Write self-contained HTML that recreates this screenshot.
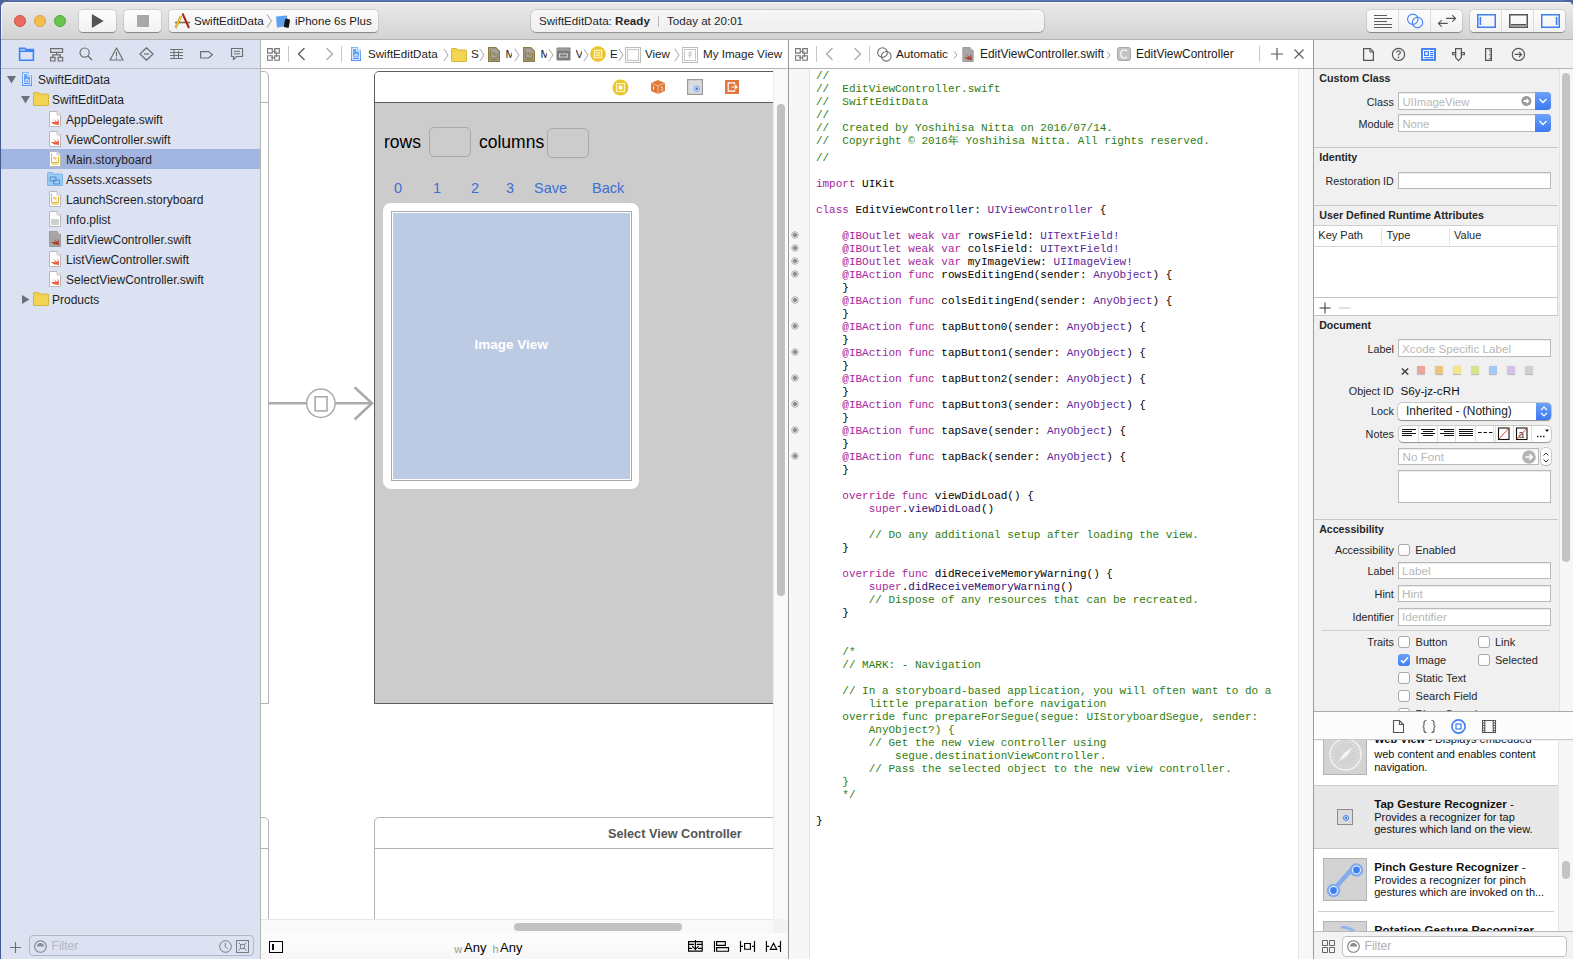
<!DOCTYPE html>
<html><head><meta charset="utf-8">
<style>
*{box-sizing:border-box;margin:0;padding:0}
html,body{width:1573px;height:959px;overflow:hidden;background:#5a73a6;font-family:"Liberation Sans",sans-serif;}
.a{position:absolute}
#win{position:absolute;left:0;top:0;width:1573px;height:959px;background:#ececec;overflow:hidden}
#tb{position:absolute;left:0;top:0;width:1573px;height:40px;background:linear-gradient(#ebebeb,#d3d3d3);border-bottom:1px solid #b1b1b1}
.btn{position:absolute;top:8px;height:22px;border-radius:4px;background:linear-gradient(#fdfdfd,#f1f1f1);box-shadow:0 0.5px 1px rgba(0,0,0,.35),0 0 0 0.5px rgba(0,0,0,.12)}
.t12{font-size:12px;line-height:20px;white-space:pre;color:#1e1e1e}
#nav{position:absolute;left:0;top:40px;width:260px;height:919px;background:#dce2f1}
#navtb{position:absolute;left:0;top:0;width:260px;height:29px;border-bottom:1px solid #b8bcc6}
.row{position:absolute;left:0;width:259px;height:20px}
.row .tx{position:absolute;top:0}
#canvas{position:absolute;left:260px;top:40px;width:528px;height:919px;background:#fff;overflow:hidden;border-left:1px solid #b5b5b5}
.jb{position:absolute;left:0;top:0;height:29px;background:#fff;border-bottom:1px solid #b5b5b5}
#editor{position:absolute;left:788px;top:40px;width:525px;height:919px;background:#fff;border-left:1px solid #9a9a9a}
#insp{position:absolute;left:1313px;top:40px;width:260px;height:919px;background:#f0f0f0;overflow:hidden;border-left:1px solid #9c9c9c}
.code{position:absolute;left:26.9px;font-family:"Liberation Mono",monospace;font-size:11px;line-height:13px;white-space:pre;color:#000}
.omk{position:absolute;left:1.5px;width:8px;height:8px;border-radius:50%;background:radial-gradient(circle,#8d8d8d 0 1.6px,#dedede 2.2px,#cacaca 2.8px,#c4c4c4 3.6px,rgba(200,200,200,0) 4px)}
.jt{top:4px;font-size:11.6px;line-height:20px;white-space:pre;color:#1c1c1c}
.chev{top:8px;width:6px;height:14px}
.btnt{top:138px;font-size:14.5px;line-height:20px;color:#3d6fd6;white-space:pre}
.cm{color:#2e7d0e}.kw{color:#a8259a}.ty{color:#5c2699}.fn{color:#2e0d6e}
</style></head><body>
<div id="win">
  <div id="tb">
    <div class="a" style="left:14px;top:15px;width:12px;height:12px;border-radius:50%;background:#ec6b5f;border:0.5px solid #d0503f"></div>
    <div class="a" style="left:34px;top:15px;width:12px;height:12px;border-radius:50%;background:#f4bf4f;border:0.5px solid #d8a03a"></div>
    <div class="a" style="left:54px;top:15px;width:12px;height:12px;border-radius:50%;background:#6ac54f;border:0.5px solid #4ca73b"></div>
    <div class="btn" style="left:79px;top:10px;width:37px"></div>
    <svg class="a" style="left:91px;top:14px" width="14" height="14" viewBox="0 0 14 14"><path d="M0.9 0V14L12.7 7Z" fill="#545454"/></svg>
    <div class="btn" style="left:124px;top:10px;width:37px"></div>
    <div class="a" style="left:137px;top:15px;width:12px;height:12px;background:#a8a8a8"></div>
    <div class="btn" style="left:169px;top:10px;width:209px"></div>
    <svg class="a" style="left:174px;top:12px" width="17" height="17" viewBox="0 0 17 17"><path d="M1 10.5H16" stroke="#8a6a3a" stroke-width="1.6"/><path d="M8.5 1.5L15 16" stroke="#a3251c" stroke-width="2"/><path d="M7 4L1.5 16" stroke="#b78c2c" stroke-width="2.4"/><path d="M7 4L1.5 16" stroke="#f1d44a" stroke-width="1.2"/></svg>
    <div class="a" style="left:194px;top:11px;font-size:11.6px;line-height:20px;white-space:pre;color:#1a1a1a">SwiftEditData</div>
    <svg class="a" style="left:266px;top:14px" width="7" height="14" viewBox="0 0 7 14"><path d="M1 0.5L5.5 7L1 13.5" fill="none" stroke="#9a9a9a" stroke-width="1"/></svg>
    <svg class="a" style="left:275px;top:15px" width="16" height="13" viewBox="0 0 16 13"><path d="M1 1.5L12 0.5L13 11L2 12.5Z" fill="#5e9ff1"/><rect x="9.5" y="4" width="5" height="8.5" rx="1" fill="#111" transform="rotate(10 12 8)"/></svg>
    <div class="a" style="left:295px;top:11px;font-size:11.5px;line-height:20px;white-space:pre;color:#1a1a1a">iPhone 6s Plus</div>
    <div class="a" style="left:531px;top:10px;width:512.5px;height:22px;border-radius:5px;background:linear-gradient(#f6f6f6,#f0f0f0);box-shadow:0 0 0 0.5px rgba(0,0,0,.2),0 0.5px 1px rgba(0,0,0,.25)"></div>
    <div class="a" style="left:539px;top:11px;font-size:11.6px;line-height:20px;white-space:pre;color:#262626">SwiftEditData: <b>Ready</b></div>
    <div class="a" style="left:658px;top:16px;width:1px;height:11px;background:#b9b9b9"></div>
    <div class="a" style="left:667px;top:11px;font-size:11.6px;line-height:20px;white-space:pre;color:#262626">Today at 20:01</div>
    <div class="btn" style="left:1367px;top:10px;width:95px"></div>
    <div class="a" style="left:1398px;top:10px;width:1px;height:22px;background:#dadada"></div>
    <div class="a" style="left:1430px;top:10px;width:1px;height:22px;background:#dadada"></div>
    <svg class="a" style="left:1374px;top:15px" width="18" height="13" viewBox="0 0 18 13"><path d="M0 0.5H13M0 3.5H18M0 6.5H13M0 9.5H18M0 12.5H18" stroke="#5a5a5a" stroke-width="1"/></svg>
    <svg class="a" style="left:1406px;top:13px" width="18" height="16" viewBox="0 0 18 16"><circle cx="6.8" cy="6.3" r="5.2" fill="none" stroke="#3f7ef6" stroke-width="1.1"/><circle cx="11.5" cy="9.5" r="5.2" fill="none" stroke="#3f7ef6" stroke-width="1.1"/></svg>
    <svg class="a" style="left:1437px;top:14px" width="20" height="14" viewBox="0 0 20 14"><path d="M9.1 4.4H18.6M15.2 1.2L18.6 4.4L15.2 7.6M10.75 9.4H1.4M4.7 6.2L1.4 9.4L4.7 12.7" fill="none" stroke="#555" stroke-width="1.1"/></svg>
    <div class="btn" style="left:1470px;top:10px;width:95px"></div>
    <div class="a" style="left:1501px;top:10px;width:1px;height:22px;background:#dadada"></div>
    <div class="a" style="left:1533px;top:10px;width:1px;height:22px;background:#dadada"></div>
    <svg class="a" style="left:1477px;top:14px" width="19" height="14" viewBox="0 0 19 14"><rect x="0.75" y="0.75" width="17.5" height="12.5" fill="none" stroke="#3f7ef6" stroke-width="1.5"/><rect x="2.6" y="3" width="1.6" height="8" fill="#3f7ef6"/></svg>
    <svg class="a" style="left:1509px;top:14px" width="19" height="14" viewBox="0 0 19 14"><rect x="0.75" y="0.75" width="17.5" height="12.5" fill="none" stroke="#555" stroke-width="1.5"/><rect x="2" y="10" width="15" height="1.6" fill="#555"/></svg>
    <svg class="a" style="left:1541px;top:14px" width="19" height="14" viewBox="0 0 19 14"><rect x="0.75" y="0.75" width="17.5" height="12.5" fill="none" stroke="#3f7ef6" stroke-width="1.5"/><rect x="14.8" y="3" width="1.6" height="8" fill="#3f7ef6"/></svg>
  </div>
  <div id="nav">
<svg width="0" height="0" style="position:absolute">
 <defs>
  <symbol id="i-doc" viewBox="0 0 12 16"><path d="M0.5 0.5H8L11.5 4V15.5H0.5Z" fill="#fff" stroke="#b9b9b9"/><path d="M8 0.5V4H11.5" fill="#eee" stroke="#c8c8c8"/></symbol>
  <symbol id="i-swift" viewBox="0 0 12 16"><path d="M0.5 0.5H8L11.5 4V15.5H0.5Z" fill="#fff" stroke="#b9b9b9"/><path d="M8 0.5V4H11.5" fill="#eee" stroke="#c8c8c8"/><g transform="translate(2 6.8) scale(0.85)"><path d="M0 4.8C2.2 7 4.8 8.4 7 7.8C7.8 8.4 8.8 8.7 9.8 8.5C9.2 7.9 9 7.2 9.2 6.2C9.8 4 8.8 1.8 7.2 0.4C8 2 8.2 3.6 7.5 5C5.6 3.9 3.6 2.2 1.9 0.6C3.1 2.2 4.6 3.8 5.6 5.1C3.8 5 2 4.8 0 4.8Z" fill="#ea5a3c"/></g></symbol>
  <symbol id="i-swiftg" viewBox="0 0 12 16"><path d="M0.5 0.5H8L11.5 4V15.5H0.5Z" fill="#a6a6a6" stroke="#9a9a9a"/><path d="M8 0.5V4H11.5" fill="#c9c9c9" stroke="#9a9a9a"/><g transform="translate(2 6.8) scale(0.85)"><path d="M0 4.8C2.2 7 4.8 8.4 7 7.8C7.8 8.4 8.8 8.7 9.8 8.5C9.2 7.9 9 7.2 9.2 6.2C9.8 4 8.8 1.8 7.2 0.4C8 2 8.2 3.6 7.5 5C5.6 3.9 3.6 2.2 1.9 0.6C3.1 2.2 4.6 3.8 5.6 5.1C3.8 5 2 4.8 0 4.8Z" fill="#a8402a"/></g></symbol>
  <symbol id="i-sb" viewBox="0 0 12 16"><path d="M0.5 0.5H8L11.5 4V15.5H0.5Z" fill="#fff" stroke="#b9b9b9"/><path d="M8 0.5V4H11.5" fill="#eee" stroke="#c8c8c8"/><path d="M2.5 2.5V11.5H9.5V5.5" fill="none" stroke="#e4b62a" stroke-width="1"/><path d="M2.5 13H9.5" stroke="#e4b62a"/><path d="M4 8C5 6 7 6 8 7.5M4.5 6.5L7.5 9.5" fill="none" stroke="#e4b62a" stroke-width=".9"/></symbol>
  <symbol id="i-plist" viewBox="0 0 12 16"><path d="M0.5 0.5H8L11.5 4V15.5H0.5Z" fill="#fff" stroke="#b9b9b9"/><path d="M8 0.5V4H11.5" fill="#eee" stroke="#c8c8c8"/><path d="M2.5 8.5H9.5V13.5H2.5ZM2.5 11H9.5M5 8.5V13.5M7.2 8.5V13.5" fill="#ddd" stroke="#c4c4c4" stroke-width=".8"/></symbol>
  <symbol id="i-proj" viewBox="0 0 12 16"><defs><linearGradient id="gp" x1="0" y1="0" x2="0" y2="1"><stop offset="0" stop-color="#7ab2f4"/><stop offset="1" stop-color="#4a88f2"/></linearGradient></defs><path d="M1 0H7.8L11 3.2V14H1Z" fill="url(#gp)"/><path d="M7.8 0V3.2H11Z" fill="#f4f8ff"/><path d="M2.4 1.4H6.8V4.2H9.6V12.6H2.4ZM2.4 10.2H9.6" fill="none" stroke="#eaf2fe" stroke-width="1"/><path d="M4.2 8.6Q6 6.6 7.8 8.6" fill="none" stroke="#eaf2fe" stroke-width="1.1"/></symbol>
  <symbol id="i-folder" viewBox="0 0 16 14"><path d="M0.5 1.2Q0.5 0.5 1.2 0.5H5.5L6.5 2H14.8Q15.5 2 15.5 2.7V13Q15.5 13.5 15 13.5H1Q0.5 13.5 0.5 13Z" fill="#f2d552" stroke="#d8b63a"/><path d="M0.5 3H15.5" stroke="#e6c544" stroke-width=".6"/></symbol>
  <symbol id="i-assets" viewBox="0 0 16 14"><path d="M0.5 1.2Q0.5 0.5 1.2 0.5H5.5L6.5 2H14.8Q15.5 2 15.5 2.7V13Q15.5 13.5 15 13.5H1Q0.5 13.5 0.5 13Z" fill="#9ccbf3" stroke="#7fb5e6"/><path d="M3 5H9V9H3ZM6.5 8H12.5V12H6.5Z" fill="none" stroke="#4b8ed6" stroke-width="1"/></symbol>
  <symbol id="i-tri" viewBox="0 0 9 8"><path d="M0 0H9L4.5 7.5Z" fill="#6d717a"/></symbol>
  <symbol id="i-trir" viewBox="0 0 8 9"><path d="M0 0V9L7.5 4.5Z" fill="#6d717a"/></symbol>
  <symbol id="i-chev" viewBox="0 0 6 14"><path d="M0.8 0.8L5 7L0.8 13.2" fill="none" stroke="#a5a5a5" stroke-width="1"/></symbol>
  <symbol id="i-sbg" viewBox="0 0 12 15"><path d="M0.6 0.6H7.8L11.4 4.2V14.4H0.6Z" fill="#a7a39a" stroke="#8b7b3f" stroke-width="1.2"/><path d="M2.6 3V11H9.4V6M2.6 12.6H9.4" fill="none" stroke="#8b7b3f" stroke-width="1"/><path d="M4 7.5C5 5.5 7 5.5 8 7M4.5 6L7.5 9" fill="none" stroke="#8b7b3f" stroke-width=".9"/></symbol>
 </defs>
</svg>
<div id="navtb">
 <svg class="a" style="left:18px;top:7px" width="17" height="15" viewBox="0 0 17 15"><path d="M1.6 1.4H7L8 2.6H15.4V13.2H1.6Z M1.6 4.2H15.4" fill="none" stroke="#3d82f7" stroke-width="1.6"/></svg>
 <svg class="a" style="left:49px;top:7px" width="15" height="15" viewBox="0 0 15 15"><path d="M1.6 1.6H13.6V5.4H1.6ZM1.6 10.4H6V14H1.6ZM9.2 10.4H13.6V14H9.2ZM7.6 5.4V7.8M3.8 10.4V7.8H11.4V10.4" fill="none" stroke="#6f6f6f" stroke-width="1.2"/></svg>
 <svg class="a" style="left:79px;top:7px" width="14" height="14" viewBox="0 0 14 14"><circle cx="5.6" cy="5.6" r="4.6" fill="none" stroke="#6f6f6f" stroke-width="1.2"/><path d="M9 9L13 13" stroke="#6f6f6f" stroke-width="1.4"/></svg>
 <svg class="a" style="left:109px;top:7px" width="15" height="14" viewBox="0 0 15 14"><path d="M7.5 1L14 13H1Z" fill="none" stroke="#6f6f6f" stroke-width="1.2" stroke-linejoin="round"/><path d="M7.5 5V9.5M7.5 10.8V12" stroke="#6f6f6f" stroke-width="1.2"/></svg>
 <svg class="a" style="left:139px;top:7px" width="15" height="14" viewBox="0 0 15 14"><path d="M7.5 0.8L14 7L7.5 13.2L1 7Z" fill="none" stroke="#6f6f6f" stroke-width="1.2" stroke-linejoin="round"/><path d="M5 7H10" stroke="#6f6f6f" stroke-width="1.2"/></svg>
 <svg class="a" style="left:169px;top:8px" width="15" height="12" viewBox="0 0 15 12"><path d="M1 1.5H14M1 4.5H14M1 7.5H14M1 10.5H14M5 1.5V10.5M9.5 3V10.5" fill="none" stroke="#6f6f6f" stroke-width="1"/></svg>
 <svg class="a" style="left:199px;top:8px" width="15" height="12" viewBox="0 0 15 12"><path d="M1.6 3.6H9.6L13.4 6.8L9.6 10H1.6Z" fill="none" stroke="#6f6f6f" stroke-width="1.2" stroke-linejoin="round"/></svg>
 <svg class="a" style="left:230px;top:7px" width="14" height="14" viewBox="0 0 14 14"><path d="M1.5 1.5H12.5V9.5H6.5L3.5 12.5V9.5H1.5Z" fill="none" stroke="#6f6f6f" stroke-width="1.2" stroke-linejoin="round"/><path d="M4 4.3H10M4 6.8H10" stroke="#6f6f6f" stroke-width="1"/></svg>
</div>
<div class="a" style="left:0;top:109px;width:260px;height:20px;background:#a2b5e0"></div>
<svg class="a" style="left:7px;top:36px" width="9" height="8"><use href="#i-tri"/></svg>
<svg class="a" style="left:21px;top:32px" width="12" height="16"><use href="#i-proj"/></svg>
<div class="a t12" style="left:38px;top:29.5px">SwiftEditData</div>
<svg class="a" style="left:21px;top:56px" width="9" height="8"><use href="#i-tri"/></svg>
<svg class="a" style="left:33px;top:52px" width="16" height="14"><use href="#i-folder"/></svg>
<div class="a t12" style="left:52px;top:49.5px">SwiftEditData</div>
<svg class="a" style="left:49px;top:71px" width="12" height="16"><use href="#i-swift"/></svg>
<div class="a t12" style="left:66px;top:69.5px">AppDelegate.swift</div>
<svg class="a" style="left:49px;top:91px" width="12" height="16"><use href="#i-swift"/></svg>
<div class="a t12" style="left:66px;top:89.5px">ViewController.swift</div>
<svg class="a" style="left:49px;top:111px" width="12" height="16"><use href="#i-sb"/></svg>
<div class="a t12" style="left:66px;top:109.5px">Main.storyboard</div>
<svg class="a" style="left:47px;top:132px" width="16" height="14"><use href="#i-assets"/></svg>
<div class="a t12" style="left:66px;top:129.5px">Assets.xcassets</div>
<svg class="a" style="left:49px;top:151px" width="12" height="16"><use href="#i-sb"/></svg>
<div class="a t12" style="left:66px;top:149.5px">LaunchScreen.storyboard</div>
<svg class="a" style="left:49px;top:171px" width="12" height="16"><use href="#i-plist"/></svg>
<div class="a t12" style="left:66px;top:169.5px">Info.plist</div>
<svg class="a" style="left:49px;top:191px" width="12" height="16"><use href="#i-swiftg"/></svg>
<div class="a t12" style="left:66px;top:189.5px">EditViewController.swift</div>
<svg class="a" style="left:49px;top:211px" width="12" height="16"><use href="#i-swift"/></svg>
<div class="a t12" style="left:66px;top:209.5px">ListViewController.swift</div>
<svg class="a" style="left:49px;top:231px" width="12" height="16"><use href="#i-swift"/></svg>
<div class="a t12" style="left:66px;top:229.5px">SelectViewController.swift</div>
<svg class="a" style="left:22px;top:255px" width="8" height="9"><use href="#i-trir"/></svg>
<svg class="a" style="left:33px;top:252px" width="16" height="14"><use href="#i-folder"/></svg>
<div class="a t12" style="left:52px;top:249.5px">Products</div>
<svg class="a" style="left:9px;top:901px" width="13" height="13" viewBox="0 0 13 13"><path d="M6.5 1V12M1 6.5H12" stroke="#6b6e75" stroke-width="1.1"/></svg>
<div class="a" style="left:29.4px;top:895.4px;width:225px;height:21px;border:1px solid #b3b7c0;border-radius:4px"></div>
<svg class="a" style="left:34px;top:900px" width="13" height="13" viewBox="0 0 13 13"><circle cx="6.5" cy="6.5" r="5.8" fill="none" stroke="#80848c" stroke-width="1.1"/><path d="M3 6.6A3.5 3.5 0 0 1 10 6.6Z" fill="#8a8e96"/></svg>
<div class="a" style="left:51.6px;top:896px;font-size:12px;line-height:20px;color:#b3b7c0;white-space:pre">Filter</div>
<svg class="a" style="left:219px;top:900px" width="13" height="13" viewBox="0 0 13 13"><circle cx="6.5" cy="6.5" r="5.8" fill="none" stroke="#777b83" stroke-width="1"/><path d="M6.3 3V6.8L8.6 8.6" fill="none" stroke="#777b83" stroke-width="1"/></svg>
<svg class="a" style="left:236px;top:900px" width="13" height="13" viewBox="0 0 13 13"><rect x="0.5" y="0.5" width="12" height="12" fill="none" stroke="#777b83" stroke-width="1"/><path d="M2.5 2.5L10.5 10.5M10.5 2.5L2.5 10.5" stroke="#777b83" stroke-width="1"/><circle cx="6.5" cy="6.5" r="2.2" fill="#dce2f1" stroke="#777b83" stroke-width="1"/></svg>


  </div>
  <div id="canvas">
    <div class="jb" style="width:527px"></div>
<!-- canvas jump bar: coordinates relative to canvas padding box (x-261, y-40) -->
<svg class="a" style="left:6px;top:8px" width="14" height="14" viewBox="0 0 14 14"><g fill="none" stroke="#747474" stroke-width="1.1"><path d="M0.6 0.6H5.25V5.1H0.6ZM7.7 0.6H12.35V5.1H7.7ZM0.6 7.8H5.25V12.2H0.6ZM7.7 7.8H12.35V12.2H7.7Z"/><path d="M5.25 3.4H8.7M8 2.6L8.8 3.4L8 4.2M9.5 5.1V8.7M8.7 8L9.5 8.8L10.3 8M7.7 9.5H4.4M5.1 8.7L4.3 9.5L5.1 10.3" stroke-width="0.9"/></g></svg>
<div class="a" style="left:27px;top:6px;width:1px;height:16px;background:#c6c6c6"></div>
<svg class="a" style="left:36px;top:7px" width="9" height="14" viewBox="0 0 9 14"><path d="M7.5 1L1.5 7L7.5 13" fill="none" stroke="#5b5b5b" stroke-width="1.3"/></svg>
<svg class="a" style="left:64px;top:7px" width="9" height="14" viewBox="0 0 9 14"><path d="M1.5 1L7.5 7L1.5 13" fill="none" stroke="#a8a8a8" stroke-width="1.3"/></svg>
<div class="a" style="left:80px;top:6px;width:1px;height:16px;background:#c6c6c6"></div>
<svg class="a" style="left:89px;top:7px" width="12" height="16"><use href="#i-proj"/></svg>
<div class="a jt" style="left:107px">SwiftEditData</div>
<svg class="a chev" style="left:182px"><use href="#i-chev"/></svg>
<svg class="a" style="left:190px;top:7.5px" width="16" height="14"><use href="#i-folder"/></svg>
<div class="a jt" style="left:210px">S</div>
<svg class="a chev" style="left:218px"><use href="#i-chev"/></svg>
<svg class="a" style="left:227px;top:7px" width="12" height="15"><use href="#i-sbg"/></svg>
<div class="a jt" style="left:244.5px;width:6.5px;overflow:hidden">M</div>
<svg class="a chev" style="left:253px"><use href="#i-chev"/></svg>
<svg class="a" style="left:262px;top:7px" width="12" height="15"><use href="#i-sbg"/></svg>
<div class="a jt" style="left:279.5px;width:6.5px;overflow:hidden">M</div>
<svg class="a chev" style="left:287px"><use href="#i-chev"/></svg>
<svg class="a" style="left:295px;top:7px" width="15" height="14" viewBox="0 0 15 14"><rect x="0.5" y="0.5" width="14" height="13" rx="1" fill="#7c7c7c"/><path d="M1 3H14" stroke="#aaa" stroke-width="1"/><path d="M2 1.2V2.6M4 1.2V2.6M6 1.2V2.6M8 1.2V2.6M10 1.2V2.6M12 1.2V2.6" stroke="#ddd" stroke-width=".6"/><rect x="3.5" y="7" width="8" height="3" fill="none" stroke="#ddd" stroke-width=".9"/></svg>
<div class="a jt" style="left:314.5px;width:6.5px;overflow:hidden">V</div>
<svg class="a chev" style="left:322px"><use href="#i-chev"/></svg>
<svg class="a" style="left:329px;top:6.2px" width="16" height="16" viewBox="0 0 16 16"><circle cx="8" cy="8" r="7.8" fill="#ebc428"/><rect x="4.3" y="4.3" width="7.4" height="7.4" fill="none" stroke="#fff6c8" stroke-width="1.2"/><rect x="6" y="6" width="4" height="4" fill="#f6dc6a" stroke="#fff6c8" stroke-width=".6"/></svg>
<div class="a jt" style="left:349px;width:9px;overflow:hidden">E</div>
<svg class="a chev" style="left:357px"><use href="#i-chev"/></svg>
<svg class="a" style="left:364px;top:6.5px" width="16" height="16" viewBox="0 0 16 16"><rect x="0.5" y="0.5" width="15" height="15" fill="#fff" stroke="#bdbdbd"/><rect x="2.5" y="2.5" width="11" height="11" fill="#fff" stroke="#c9c9c9" stroke-width="1.2"/></svg>
<div class="a jt" style="left:384px">View</div>
<svg class="a chev" style="left:413px"><use href="#i-chev"/></svg>
<svg class="a" style="left:421px;top:6.5px" width="16" height="16" viewBox="0 0 16 16"><rect x="0.5" y="0.5" width="15" height="15" fill="#fff" stroke="#bdbdbd"/><rect x="2.5" y="2.5" width="11" height="11" fill="#fff" stroke="#c9c9c9" stroke-width="1"/><path d="M6 6.5L10 4.5M8 5V11M6 9L10 7" stroke="#b5b5b5" stroke-width=".8"/></svg>
<div class="a jt" style="left:442px">My Image View</div>
<!-- canvas content: coords relative x-261, y-40 -->
<div class="a" style="left:-20px;top:31px;width:28px;height:633px;border:1px solid #b3b3b3;border-radius:0 5px 0 0;background:#fff"></div>
<div class="a" style="left:-20px;top:62px;width:28px;height:1px;background:#b3b3b3"></div>
<div class="a" style="left:-20px;top:777px;width:28px;height:200px;border:1px solid #b3b3b3;border-radius:0 5px 0 0;background:#fff"></div>
<div class="a" style="left:-20px;top:808px;width:28px;height:1px;background:#b3b3b3"></div>
<!-- segue -->
<svg class="a" style="left:7px;top:345px" width="108" height="38" viewBox="0 0 108 38"><path d="M0 18.3H39M67 18.3H103" fill="none" stroke="#ababab" stroke-width="2.6"/><path d="M86.6 2.2L104 18.3L86.6 34.5" fill="none" stroke="#ababab" stroke-width="2.6"/><circle cx="52.9" cy="18.3" r="14.2" fill="#fff" stroke="#ababab" stroke-width="1.5"/><rect x="47.1" y="11.8" width="11.9" height="14.1" fill="none" stroke="#ababab" stroke-width="1.6"/></svg>
<!-- main scene -->
<div class="a" style="left:113px;top:31px;width:421px;height:633px;border:1px solid #5c5c5c;border-radius:5px 0 0 0;background:#cccccc;overflow:hidden">
  <div class="a" style="left:0;top:0;width:420px;height:31px;background:#fff;border-bottom:1px solid #5c5c5c"></div>
</div>
<svg class="a" style="left:351.4px;top:38.6px" width="17" height="17" viewBox="0 0 17 17"><circle cx="8.5" cy="8.5" r="8" fill="#ebc428"/><rect x="4.5" y="4.5" width="8" height="8" fill="none" stroke="#fff3b5" stroke-width="1.3"/><rect x="6.6" y="6.6" width="3.8" height="3.8" fill="#fff"/></svg>
<svg class="a" style="left:389px;top:39px" width="16" height="16" viewBox="0 0 16 16"><path d="M1 4L8 1L15 4V12L8 15L1 12Z" fill="#e07a3c"/><path d="M1 4L8 7L15 4M8 7V15" fill="none" stroke="#f6c9a6" stroke-width=".8"/><path d="M3.5 7.5V10.5M11 8.5L12 8V12" stroke="#fff" stroke-width="1"/></svg>
<svg class="a" style="left:426px;top:39px" width="16" height="16" viewBox="0 0 16 16"><rect x="0.6" y="0.6" width="14.8" height="14.8" fill="#dcdcdc" stroke="#9a9a9a" stroke-width="1.2"/><circle cx="9.9" cy="9.7" r="2.8" fill="none" stroke="#6f9ff5" stroke-width="0.9"/><circle cx="9.9" cy="9.7" r="1.3" fill="#3d7df5"/></svg>
<svg class="a" style="left:464px;top:40px" width="14" height="14" viewBox="0 0 14 14"><rect x="0" y="0" width="14" height="14" fill="#e0773c"/><path d="M9.5 4.2V2.8H3.2V11.2H9.5V9.8M6.5 7H12M10 5L12 7L10 9" fill="none" stroke="#fff" stroke-width="1.2"/></svg>
<div class="a" style="left:123px;top:91.5px;font-size:17.5px;line-height:20px;color:#000;white-space:pre">rows</div>
<div class="a" style="left:168px;top:87px;width:42px;height:30px;border:1px solid #a9a9a9;border-radius:5px"></div>
<div class="a" style="left:218px;top:91.5px;font-size:17.5px;line-height:20px;color:#000;white-space:pre">columns</div>
<div class="a" style="left:286px;top:88px;width:42px;height:30px;border:1px solid #a9a9a9;border-radius:5px"></div>
<div class="a btnt" style="left:133px">0</div>
<div class="a btnt" style="left:172px">1</div>
<div class="a btnt" style="left:210px">2</div>
<div class="a btnt" style="left:245px">3</div>
<div class="a btnt" style="left:273px">Save</div>
<div class="a btnt" style="left:331px">Back</div>
<div class="a" style="left:122px;top:163px;width:256px;height:286px;background:#fff;border-radius:8px"></div>
<div class="a" style="left:130px;top:171px;width:240.5px;height:270px;border:1px solid #aaa;background:#bccae3;box-shadow:inset 0 0 0 1px #fff"></div>
<div class="a" style="left:130px;top:295px;width:240.5px;text-align:center;font-weight:bold;font-size:13.5px;line-height:20px;color:#fff">Image View</div>
<!-- second scene -->
<div class="a" style="left:113px;top:777px;width:421px;height:200px;border:1px solid #b3b3b3;border-radius:5px 0 0 0;background:#fff"></div>
<div class="a" style="left:113px;top:808px;width:421px;height:1px;background:#b3b3b3"></div>
<div class="a" style="left:347px;top:783.8px;font-weight:bold;font-size:12.7px;line-height:20px;color:#555;white-space:pre">Select View Controller</div>
<!-- vertical scrollbar -->
<div class="a" style="left:512px;top:29px;width:15px;height:850px;background:#f9f9f9;border-left:1px solid #ececec"></div>
<div class="a" style="left:516px;top:64px;width:8px;height:492px;border-radius:4px;background:#c1c1c1"></div>
<!-- horizontal scrollbar -->
<div class="a" style="left:0;top:879px;width:512px;height:15px;background:#f9f9f9;border-top:1px solid #e6e6e6;border-bottom:1px solid #e6e6e6"></div>
<div class="a" style="left:253px;top:883px;width:168px;height:8px;border-radius:4px;background:#c1c1c1"></div>
<div class="a" style="left:512px;top:879px;width:15px;height:15px;background:#f3f3f3"></div>
<!-- bottom bar -->
<div class="a" style="left:0;top:893px;width:527px;height:26px;background:linear-gradient(#fdfdfd,#f7f7f7)"></div>
<div class="a" style="left:8px;top:901px;width:14px;height:12px;border:1.5px solid #000"></div>
<div class="a" style="left:11px;top:904px;width:1.6px;height:6px;background:#000"></div>
<div class="a" style="left:193.3px;top:899.1px;font-size:11px;line-height:20px;white-space:pre;color:#9a9a9a">w</div>
<div class="a" style="left:203px;top:898.1px;font-size:13px;line-height:20px;white-space:pre;color:#000">Any</div>
<div class="a" style="left:231.5px;top:899.1px;font-size:11px;line-height:20px;white-space:pre;color:#9a9a9a">h</div>
<div class="a" style="left:239px;top:898.1px;font-size:13px;line-height:20px;white-space:pre;color:#000">Any</div>
<svg class="a" style="left:426px;top:900px" width="100" height="14" viewBox="0 0 100 14">
 <g fill="none" stroke="#000" stroke-width="1.15" stroke-linecap="round">
  <path d="M1.6 1.6H15.2V11.1H1.6ZM1.6 4.4H6.7M10.2 4.4H15.2M1.6 8.4H4.8M11.4 8.4H15.2M8.4 0.3V9.6M5.6 6.4L8.4 9.3L11.3 6.4"/>
  <path d="M27.5 1.3V11.4M29.6 1.6H38.3V5.3H29.6ZM29.6 7.6H41.5V11.2H29.6Z"/>
  <path d="M53.5 1.3V11.4M53.5 6.3H55.6M57.6 3.5H63.4V9.2H57.6ZM65.4 6.3H67.5M67.5 1.3V11.4"/>
  <path d="M79.4 1.3V11.4M79.4 6.3H81.8M86.5 3.3L83.3 9.3H89.7ZM91.3 6.3H93.5M93.5 1.3V11.4"/>
 </g>
</svg>

  </div>
  <div id="editor">
    <div class="jb" style="width:524px"></div>
<!-- editor jump bar, relative x-789 -->
<svg class="a" style="left:6px;top:8px" width="14" height="14" viewBox="0 0 14 14"><g fill="none" stroke="#747474" stroke-width="1.1"><path d="M0.6 0.6H5.25V5.1H0.6ZM7.7 0.6H12.35V5.1H7.7ZM0.6 7.8H5.25V12.2H0.6ZM7.7 7.8H12.35V12.2H7.7Z"/><path d="M5.25 3.4H8.7M8 2.6L8.8 3.4L8 4.2M9.5 5.1V8.7M8.7 8L9.5 8.8L10.3 8M7.7 9.5H4.4M5.1 8.7L4.3 9.5L5.1 10.3" stroke-width="0.9"/></g></svg>
<div class="a" style="left:27px;top:6px;width:1px;height:16px;background:#c6c6c6"></div>
<svg class="a" style="left:36px;top:7px" width="9" height="14" viewBox="0 0 9 14"><path d="M7.5 1L1.5 7L7.5 13" fill="none" stroke="#a8a8a8" stroke-width="1.3"/></svg>
<svg class="a" style="left:64px;top:7px" width="9" height="14" viewBox="0 0 9 14"><path d="M1.5 1L7.5 7L1.5 13" fill="none" stroke="#a8a8a8" stroke-width="1.3"/></svg>
<div class="a" style="left:80px;top:6px;width:1px;height:16px;background:#c6c6c6"></div>
<svg class="a" style="left:88px;top:7px" width="15" height="15" viewBox="0 0 15 15"><circle cx="5.5" cy="5.5" r="4.8" fill="none" stroke="#6b6b6b" stroke-width="1.1"/><circle cx="9.3" cy="9.3" r="4.8" fill="none" stroke="#6b6b6b" stroke-width="1.1"/></svg>
<div class="a jt" style="left:107px;font-size:11.7px">Automatic</div>
<svg class="a" style="left:164px;top:11px" width="5" height="8" viewBox="0 0 5 8"><path d="M1 0.5L4 4L1 7.5" fill="none" stroke="#9d9d9d" stroke-width="1"/></svg>
<svg class="a" style="left:173px;top:7px" width="12" height="15"><use href="#i-swiftg"/></svg>
<div class="a jt" style="left:191px;font-size:11.9px">EditViewController.swift</div>
<svg class="a" style="left:317px;top:11px" width="5" height="8" viewBox="0 0 5 8"><path d="M1 0.5L4 4L1 7.5" fill="none" stroke="#9d9d9d" stroke-width="1"/></svg>
<svg class="a" style="left:328px;top:7px" width="14" height="14" viewBox="0 0 14 14"><rect x="0.5" y="0.5" width="13" height="13" rx="2" fill="#c3c3c3" stroke="#a5a5a5"/><path d="M9.8 4.2Q8.8 3 7 3Q3.8 3 3.8 7Q3.8 11 7 11Q8.8 11 9.8 9.8" fill="none" stroke="#fff" stroke-width="1.2"/></svg>
<div class="a jt" style="left:347px;font-size:11.9px">EditViewController</div>
<div class="a" style="left:470px;top:6px;width:1px;height:16px;background:#c6c6c6"></div>
<svg class="a" style="left:482px;top:8px" width="12" height="12" viewBox="0 0 12 12"><path d="M6 0V12M0 6H12" stroke="#5b5b5b" stroke-width="1.2"/></svg>
<svg class="a" style="left:505px;top:9px" width="10" height="10" viewBox="0 0 10 10"><path d="M0.5 0.5L9.5 9.5M9.5 0.5L0.5 9.5" stroke="#5b5b5b" stroke-width="1.1"/></svg>

    <div class="a" style="left:0;top:29px;width:21px;height:890px;background:#f7f7f7;border-right:1px solid #e3e3e3"></div>
<div class="a" style="left:509px;top:29px;width:15px;height:890px;background:#f8f8f8;border-left:1px solid #e6e6e6"></div>
<div class="code" style="top:29.5px"><span class="cm">//</span></div>
<div class="code" style="top:42.5px"><span class="cm">//  EditViewController.swift</span></div>
<div class="code" style="top:55.5px"><span class="cm">//  SwiftEditData</span></div>
<div class="code" style="top:68.5px"><span class="cm">//</span></div>
<div class="code" style="top:81.5px"><span class="cm">//  Created by Yoshihisa Nitta on 2016/07/14.</span></div>
<div class="code" style="top:94.5px"><span class="cm">//  Copyright © 2016年 Yoshihisa Nitta. All rights reserved.</span></div>
<div class="code" style="top:111.5px"><span class="cm">//</span></div>
<div class="code" style="top:137.5px"><span class="kw">import</span> UIKit</div>
<div class="code" style="top:163.5px"><span class="kw">class</span> EditViewController: <span class="ty">UIViewController</span> {</div>
<div class="code" style="top:189.5px">    <span class="kw">@IBOutlet weak var</span> rowsField: <span class="ty">UITextField!</span></div>
<div class="code" style="top:202.5px">    <span class="kw">@IBOutlet weak var</span> colsField: <span class="ty">UITextField!</span></div>
<div class="code" style="top:215.5px">    <span class="kw">@IBOutlet weak var</span> myImageView: <span class="ty">UIImageView!</span></div>
<div class="code" style="top:228.5px">    <span class="kw">@IBAction func</span> rowsEditingEnd(sender: <span class="ty">AnyObject</span>) {</div>
<div class="code" style="top:241.5px">    }</div>
<div class="code" style="top:254.5px">    <span class="kw">@IBAction func</span> colsEditingEnd(sender: <span class="ty">AnyObject</span>) {</div>
<div class="code" style="top:267.5px">    }</div>
<div class="code" style="top:280.5px">    <span class="kw">@IBAction func</span> tapButton0(sender: <span class="ty">AnyObject</span>) {</div>
<div class="code" style="top:293.5px">    }</div>
<div class="code" style="top:306.5px">    <span class="kw">@IBAction func</span> tapButton1(sender: <span class="ty">AnyObject</span>) {</div>
<div class="code" style="top:319.5px">    }</div>
<div class="code" style="top:332.5px">    <span class="kw">@IBAction func</span> tapButton2(sender: <span class="ty">AnyObject</span>) {</div>
<div class="code" style="top:345.5px">    }</div>
<div class="code" style="top:358.5px">    <span class="kw">@IBAction func</span> tapButton3(sender: <span class="ty">AnyObject</span>) {</div>
<div class="code" style="top:371.5px">    }</div>
<div class="code" style="top:384.5px">    <span class="kw">@IBAction func</span> tapSave(sender: <span class="ty">AnyObject</span>) {</div>
<div class="code" style="top:397.5px">    }</div>
<div class="code" style="top:410.5px">    <span class="kw">@IBAction func</span> tapBack(sender: <span class="ty">AnyObject</span>) {</div>
<div class="code" style="top:423.5px">    }</div>
<div class="code" style="top:449.5px">    <span class="kw">override func</span> viewDidLoad() {</div>
<div class="code" style="top:462.5px">        <span class="kw">super</span>.<span class="fn">viewDidLoad</span>()</div>
<div class="code" style="top:488.5px">        <span class="cm">// Do any additional setup after loading the view.</span></div>
<div class="code" style="top:501.5px">    }</div>
<div class="code" style="top:527.5px">    <span class="kw">override func</span> didReceiveMemoryWarning() {</div>
<div class="code" style="top:540.5px">        <span class="kw">super</span>.<span class="fn">didReceiveMemoryWarning</span>()</div>
<div class="code" style="top:553.5px">        <span class="cm">// Dispose of any resources that can be recreated.</span></div>
<div class="code" style="top:566.5px">    }</div>
<div class="code" style="top:605.5px"><span class="cm">    /*</span></div>
<div class="code" style="top:618.5px"><span class="cm">    // MARK: - Navigation</span></div>
<div class="code" style="top:644.5px"><span class="cm">    // In a storyboard-based application, you will often want to do a</span></div>
<div class="code" style="top:657.5px"><span class="cm">        little preparation before navigation</span></div>
<div class="code" style="top:670.5px"><span class="cm">    override func prepareForSegue(segue: UIStoryboardSegue, sender:</span></div>
<div class="code" style="top:683.5px"><span class="cm">        AnyObject?) {</span></div>
<div class="code" style="top:696.5px"><span class="cm">        // Get the new view controller using</span></div>
<div class="code" style="top:709.5px"><span class="cm">            segue.destinationViewController.</span></div>
<div class="code" style="top:722.5px"><span class="cm">        // Pass the selected object to the new view controller.</span></div>
<div class="code" style="top:735.5px"><span class="cm">    }</span></div>
<div class="code" style="top:748.5px"><span class="cm">    */</span></div>
<div class="code" style="top:774.5px">}</div>
<div class="omk" style="top:190.9px"></div>
<div class="omk" style="top:203.9px"></div>
<div class="omk" style="top:216.9px"></div>
<div class="omk" style="top:229.9px"></div>
<div class="omk" style="top:255.9px"></div>
<div class="omk" style="top:281.9px"></div>
<div class="omk" style="top:307.9px"></div>
<div class="omk" style="top:333.9px"></div>
<div class="omk" style="top:359.9px"></div>
<div class="omk" style="top:385.9px"></div>
<div class="omk" style="top:411.9px"></div>
  </div>
  <div id="insp">
<div class="a" style="left:0.0px;top:0.0px;width:259.0px;height:28.0px;background:#f2f2f2"></div>
<div class="a" style="left:0.0px;top:28.0px;width:259.0px;height:1.0px;background:#b5b5b5"></div>

<svg class="a" style="left:0.0px;top:7.0px" width="260" height="16" viewBox="0 0 260 16">
 <g fill="none" stroke="#555" stroke-width="1.2">
  <path d="M49.6 1.6H56.3L59.4 4.7V13.4H49.6Z"/><path d="M56 2.2V5H59" stroke-width="1"/>
  <circle cx="84.5" cy="7.4" r="6.1"/>
  <path d="M82.6 5.6Q82.6 3.9 84.5 3.9Q86.4 3.9 86.4 5.5Q86.4 6.7 84.5 7.4V8.6" stroke-width="1.1"/>
  <path d="M141.6 1.6H147.4V10.6L144.5 13.6L141.6 10.6Z"/>
  <path d="M138.6 5.6H141.6V7.8H138.6ZM147.4 5.6H150.4V7.8H147.4Z" stroke-width="1.1"/>
  <path d="M171.6 1.6H177.4V13.4H171.6Z"/>
  <path d="M175 3.8H177.4M176 5.8H177.4M175 7.8H177.4M176 9.8H177.4M175 11.6H177.4" stroke-width="0.9"/>
  <circle cx="204.4" cy="7.4" r="6.1"/>
  <path d="M200.6 7.4H207.6M205 4.8L207.6 7.4L205 10" stroke-width="1.1"/>
 </g>
 <circle cx="84.5" cy="10.4" r="0.8" fill="#555"/>
 <rect x="108" y="2" width="13" height="10.9" fill="#fff" stroke="#3f7ef6" stroke-width="1.9"/>
 <g fill="none" stroke="#3f7ef6" stroke-width="1.1" stroke-linecap="round">
  <rect x="110.6" y="4.6" width="3.8" height="3.8" stroke-width="1.2"/>
  <path d="M116.4 4.6H119M116.4 6.6H119M116.4 8.6H119M110.6 10.6H119"/>
 </g>
</svg>
<div class="a" style="left:245.0px;top:29.0px;width:14.0px;height:642.0px;background:#f7f7f7;border-left:1px solid #e4e4e4"></div>
<div class="a" style="left:248.0px;top:33.0px;width:8.0px;height:489.0px;background:#c3c3c3;border-radius:4px"></div>
<div class="a" style="left:5.3px;top:31.0px;font-size:10.7px;line-height:14px;font-weight:bold;color:#262626;white-space:pre;">Custom Class</div>
<div class="a" style="left:-220.2px;width:300px;text-align:right;top:55.3px;font-size:10.8px;line-height:14px;color:#262626;white-space:pre;">Class</div>
<div class="a" style="left:84.0px;top:52.0px;width:153.0px;height:18.0px;background:#fff;border:1px solid #b9b9b9;box-shadow:inset 0 1px 0 #ececec;border-radius:0 4px 4px 0"></div>
<div class="a" style="left:221.0px;top:52.0px;width:16.0px;height:18.0px;background:linear-gradient(#6ea2f8,#3b78f3);border-radius:0 4px 4px 0"></div>
<svg class="a" style="left:224.0px;top:57.0px" width="10" height="8" viewBox="0 0 10 8"><path d="M1.5 2L5 5.5L8.5 2" fill="none" stroke="#fff" stroke-width="1.3"/></svg>
<div class="a" style="left:88.4px;top:54.6px;font-size:11.3px;line-height:14px;color:#b8b8b8;white-space:pre;">UIImageView</div>
<svg class="a" style="left:206.5px;top:55.5px" width="11" height="11" viewBox="0 0 11 11"><circle cx="5.4" cy="5" r="5" fill="#9a9a9a"/><path d="M2.6 4H5.6V2L8.4 5L5.6 8V6H2.6Z" fill="#fff"/></svg>
<div class="a" style="left:-220.2px;width:300px;text-align:right;top:76.8px;font-size:10.8px;line-height:14px;color:#262626;white-space:pre;">Module</div>
<div class="a" style="left:84.0px;top:74.0px;width:153.0px;height:18.0px;background:#fff;border:1px solid #b9b9b9;box-shadow:inset 0 1px 0 #ececec;border-radius:0 4px 4px 0"></div>
<div class="a" style="left:221.0px;top:74.0px;width:16.0px;height:18.0px;background:linear-gradient(#6ea2f8,#3b78f3);border-radius:0 4px 4px 0"></div>
<svg class="a" style="left:224.0px;top:79.0px" width="10" height="8" viewBox="0 0 10 8"><path d="M1.5 2L5 5.5L8.5 2" fill="none" stroke="#fff" stroke-width="1.3"/></svg>
<div class="a" style="left:88.4px;top:77.1px;font-size:11.3px;line-height:14px;color:#b8b8b8;white-space:pre;">None</div>
<div class="a" style="left:0.0px;top:107.0px;width:244.0px;height:1.0px;background:#c6c6c6"></div>
<div class="a" style="left:5.3px;top:110.3px;font-size:10.7px;line-height:14px;font-weight:bold;color:#262626;white-space:pre;">Identity</div>
<div class="a" style="left:-220.2px;width:300px;text-align:right;top:133.7px;font-size:10.7px;line-height:14px;color:#262626;white-space:pre;">Restoration ID</div>
<div class="a" style="left:84.0px;top:131.6px;width:153.0px;height:17.9px;background:#fff;border:1px solid #b9b9b9;box-shadow:inset 0 1px 0 #ececec"></div>
<div class="a" style="left:0.0px;top:165.0px;width:244.0px;height:1.0px;background:#c6c6c6"></div>
<div class="a" style="left:5.3px;top:168.3px;font-size:10.7px;line-height:14px;font-weight:bold;color:#262626;white-space:pre;">User Defined Runtime Attributes</div>
<div class="a" style="left:0.0px;top:184.5px;width:244.0px;height:91.0px;background:#fff;border-top:1px solid #d0d0d0;border-right:1px solid #d9d9d9"></div>
<div class="a" style="left:0.0px;top:206.0px;width:244.0px;height:1.0px;background:#d6d6d6"></div>
<div class="a" style="left:67.0px;top:188.0px;width:1.0px;height:17.0px;background:#e3e3e3"></div>
<div class="a" style="left:135.0px;top:188.0px;width:1.0px;height:17.0px;background:#e3e3e3"></div>
<div class="a" style="left:4.3px;top:188.4px;font-size:11px;line-height:14px;color:#262626;white-space:pre;">Key Path</div>
<div class="a" style="left:72.5px;top:188.4px;font-size:11px;line-height:14px;color:#262626;white-space:pre;">Type</div>
<div class="a" style="left:140.0px;top:188.4px;font-size:11px;line-height:14px;color:#262626;white-space:pre;">Value</div>
<div class="a" style="left:0.0px;top:257.0px;width:244.0px;height:1.0px;background:#c4c4c4"></div>
<svg class="a" style="left:4.5px;top:262.0px" width="34" height="12" viewBox="0 0 34 12"><path d="M6 0.5V11.5M0.5 6H11.5" stroke="#333" stroke-width="1"/><path d="M20 6H31.5" stroke="#c6c6c6" stroke-width="1"/></svg>
<div class="a" style="left:0.0px;top:275.0px;width:244.0px;height:1.0px;background:#c4c4c4"></div>
<div class="a" style="left:5.2px;top:278.0px;font-size:10.6px;line-height:14px;font-weight:bold;color:#262626;white-space:pre;">Document</div>
<div class="a" style="left:-220.2px;width:300px;text-align:right;top:302.3px;font-size:10.8px;line-height:14px;color:#262626;white-space:pre;">Label</div>
<div class="a" style="left:84.0px;top:299.4px;width:153.0px;height:18.1px;background:#fff;border:1px solid #b9b9b9;box-shadow:inset 0 1px 0 #ececec"></div>
<div class="a" style="left:88.0px;top:302.1px;font-size:11.7px;line-height:14px;color:#b8b8b8;white-space:pre;">Xcode Specific Label</div>
<svg class="a" style="left:87.0px;top:327.5px" width="8" height="7" viewBox="0 0 8 7"><path d="M0.8 0.5L7.2 6.5M7.2 0.5L0.8 6.5" stroke="#444" stroke-width="1.5"/></svg>
<div class="a" style="left:103.0px;top:326.2px;width:8.0px;height:8.0px;background:#eaa69c;border-radius:1px;box-shadow:0 0.5px 1px rgba(0,0,0,.25)"></div>
<div class="a" style="left:121.0px;top:326.2px;width:8.0px;height:8.0px;background:#efc27e;border-radius:1px;box-shadow:0 0.5px 1px rgba(0,0,0,.25)"></div>
<div class="a" style="left:139.0px;top:326.2px;width:8.0px;height:8.0px;background:#f3e58c;border-radius:1px;box-shadow:0 0.5px 1px rgba(0,0,0,.25)"></div>
<div class="a" style="left:157.0px;top:326.2px;width:8.0px;height:8.0px;background:#d5e48c;border-radius:1px;box-shadow:0 0.5px 1px rgba(0,0,0,.25)"></div>
<div class="a" style="left:175.0px;top:326.2px;width:8.0px;height:8.0px;background:#a7c7f7;border-radius:1px;box-shadow:0 0.5px 1px rgba(0,0,0,.25)"></div>
<div class="a" style="left:193.0px;top:326.2px;width:8.0px;height:8.0px;background:#d6bfea;border-radius:1px;box-shadow:0 0.5px 1px rgba(0,0,0,.25)"></div>
<div class="a" style="left:211.0px;top:326.2px;width:8.0px;height:8.0px;background:#d0d0d0;border-radius:1px;box-shadow:0 0.5px 1px rgba(0,0,0,.25)"></div>
<div class="a" style="left:-220.2px;width:300px;text-align:right;top:343.9px;font-size:10.8px;line-height:14px;color:#262626;white-space:pre;">Object ID</div>
<div class="a" style="left:86.5px;top:343.8px;font-size:11.7px;line-height:14px;color:#111;white-space:pre;">S6y-jz-cRH</div>
<div class="a" style="left:-220.2px;width:300px;text-align:right;top:363.9px;font-size:10.8px;line-height:14px;color:#262626;white-space:pre;">Lock</div>
<div class="a" style="left:84.0px;top:363.0px;width:153.0px;height:17.0px;background:#fff;border-radius:4px;box-shadow:0 0 0 0.5px rgba(0,0,0,.3),0 0.5px 1px rgba(0,0,0,.3)"></div>
<div class="a" style="left:222.0px;top:363.0px;width:15.0px;height:17.0px;background:linear-gradient(#6ea2f8,#3b78f3);border-radius:0 4px 4px 0"></div>
<svg class="a" style="left:225.5px;top:365.0px" width="8" height="13" viewBox="0 0 8 13"><path d="M1 5L4 2L7 5M1 8L4 11L7 8" fill="none" stroke="#fff" stroke-width="1.2"/></svg>
<div class="a" style="left:92.0px;top:363.5px;font-size:11.9px;line-height:14px;color:#1a1a1a;white-space:pre;">Inherited - (Nothing)</div>
<div class="a" style="left:-220.2px;width:300px;text-align:right;top:386.8px;font-size:10.8px;line-height:14px;color:#262626;white-space:pre;">Notes</div>
<div class="a" style="left:84.5px;top:385.5px;width:152.0px;height:16.7px;background:#fff;border-radius:4px;box-shadow:0 0 0 0.5px rgba(0,0,0,.28),0 0.5px 1px rgba(0,0,0,.28)"></div>
<div class="a" style="left:103.6px;top:386.0px;width:0.8px;height:16.0px;background:#dedede"></div>
<div class="a" style="left:122.7px;top:386.0px;width:0.8px;height:16.0px;background:#dedede"></div>
<div class="a" style="left:141.4px;top:386.0px;width:0.8px;height:16.0px;background:#dedede"></div>
<div class="a" style="left:160.5px;top:386.0px;width:0.8px;height:16.0px;background:#dedede"></div>
<div class="a" style="left:179.3px;top:386.0px;width:0.8px;height:16.0px;background:#dedede"></div>
<div class="a" style="left:180.6px;top:386.0px;width:0.8px;height:16.0px;background:#dedede"></div>
<div class="a" style="left:198.7px;top:386.0px;width:0.8px;height:16.0px;background:#dedede"></div>
<div class="a" style="left:216.6px;top:386.0px;width:0.8px;height:16.0px;background:#dedede"></div>
<svg class="a" style="left:84.5px;top:387.0px" width="150" height="14" viewBox="0 0 150 14">
 <g stroke="#111" stroke-width="1">
  <path d="M3 2.5H17M3 4.5H13M3 6.5H17M3 8.5H13"/>
  <path d="M22 2.5H36M24 4.5H34M22 6.5H36M24 8.5H34"/>
  <path d="M41 2.5H55M45 4.5H55M41 6.5H55M45 8.5H55"/>
  <path d="M60 2.5H74M60 4.5H74M60 6.5H74M60 8.5H74"/>
  <path d="M79 5.5H82.5M84.5 5.5H88M90 5.5H93.5"/>
 </g>
 <rect x="99.5" y="1" width="10.5" height="11.5" fill="none" stroke="#111" stroke-width="1.1"/>
 <path d="M100 12L109.5 1.5" stroke="#e8452c" stroke-width="1"/>
 <rect x="117.5" y="1" width="10.5" height="11.5" fill="none" stroke="#111" stroke-width="1.1"/>
 <text x="119.6" y="10.5" font-family="Liberation Sans" font-size="10" fill="#444">a</text>
 <path d="M118 12L127.5 1.5" stroke="#e8452c" stroke-width="1"/>
 <path d="M138 9.5h1.5M141 9.5h1.5M144 9.5h1.5" stroke="#222" stroke-width="1.4"/>
 <path d="M146 2.5H150L148 5Z" fill="#111"/>
</svg>
<div class="a" style="left:84.0px;top:407.6px;width:141.0px;height:17.8px;background:#fff;border:1px solid #b9b9b9;box-shadow:inset 0 1px 0 #ececec"></div>
<div class="a" style="left:88.5px;top:410.1px;font-size:11.7px;line-height:14px;color:#b8b8b8;white-space:pre;">No Font</div>
<svg class="a" style="left:208.0px;top:410.0px" width="14" height="14" viewBox="0 0 14 14"><circle cx="7" cy="7" r="6.8" fill="#b4b4b4"/><path d="M3.3 7H9.8M7.4 4.2L10.2 7L7.4 9.8" fill="none" stroke="#fff" stroke-width="1.6"/></svg>
<div class="a" style="left:226.5px;top:407.6px;width:10.0px;height:17.8px;background:#fff;border-radius:4px;box-shadow:0 0 0 0.5px rgba(0,0,0,.3),0 0.5px 1px rgba(0,0,0,.25)"></div>
<svg class="a" style="left:227.5px;top:410.5px" width="8" height="13" viewBox="0 0 8 13"><path d="M1.5 4.5L4 2L6.5 4.5M1.5 8.5L4 11L6.5 8.5" fill="none" stroke="#333" stroke-width="1"/></svg>
<div class="a" style="left:84.0px;top:430.4px;width:153.0px;height:33.1px;background:#fff;border:1px solid #b9b9b9;box-shadow:inset 0 1px 0 #ececec"></div>
<div class="a" style="left:0.0px;top:479.0px;width:244.0px;height:1.0px;background:#c6c6c6"></div>
<div class="a" style="left:5.2px;top:482.0px;font-size:10.6px;line-height:14px;font-weight:bold;color:#262626;white-space:pre;">Accessibility</div>
<div class="a" style="left:-220.2px;width:300px;text-align:right;top:503.0px;font-size:10.8px;line-height:14px;color:#262626;white-space:pre;">Accessibility</div>
<div class="a" style="left:84.2px;top:504.0px;width:11.8px;height:11.6px;background:linear-gradient(#fff,#fafafa);border:1px solid #a9a9a9;border-radius:3px"></div>
<div class="a" style="left:101.2px;top:502.9px;font-size:11px;line-height:14px;color:#262626;white-space:pre;">Enabled</div>
<div class="a" style="left:-220.2px;width:300px;text-align:right;top:523.9px;font-size:10.8px;line-height:14px;color:#262626;white-space:pre;">Label</div>
<div class="a" style="left:84.0px;top:521.5px;width:153.0px;height:17.8px;background:#fff;border:1px solid #b9b9b9;box-shadow:inset 0 1px 0 #ececec"></div>
<div class="a" style="left:88.0px;top:524.1px;font-size:11.7px;line-height:14px;color:#b8b8b8;white-space:pre;">Label</div>
<div class="a" style="left:-220.2px;width:300px;text-align:right;top:547.0px;font-size:10.8px;line-height:14px;color:#262626;white-space:pre;">Hint</div>
<div class="a" style="left:84.0px;top:544.6px;width:153.0px;height:17.8px;background:#fff;border:1px solid #b9b9b9;box-shadow:inset 0 1px 0 #ececec"></div>
<div class="a" style="left:88.0px;top:547.2px;font-size:11.7px;line-height:14px;color:#b8b8b8;white-space:pre;">Hint</div>
<div class="a" style="left:-220.2px;width:300px;text-align:right;top:569.9px;font-size:10.8px;line-height:14px;color:#262626;white-space:pre;">Identifier</div>
<div class="a" style="left:84.0px;top:567.5px;width:153.0px;height:18.0px;background:#fff;border:1px solid #b9b9b9;box-shadow:inset 0 1px 0 #ececec"></div>
<div class="a" style="left:88.0px;top:570.1px;font-size:11.7px;line-height:14px;color:#b8b8b8;white-space:pre;">Identifier</div>
<div class="a" style="left:8.0px;top:590.0px;width:228.0px;height:1.0px;background:#cfcfcf"></div>
<div class="a" style="left:-220.2px;width:300px;text-align:right;top:594.9px;font-size:10.8px;line-height:14px;color:#262626;white-space:pre;">Traits</div>
<div class="a" style="left:84.2px;top:596.3px;width:11.8px;height:11.6px;background:linear-gradient(#fff,#fafafa);border:1px solid #a9a9a9;border-radius:3px"></div>
<div class="a" style="left:101.6px;top:594.8px;font-size:11px;line-height:14px;color:#262626;white-space:pre;">Button</div>
<div class="a" style="left:164.0px;top:596.3px;width:11.8px;height:11.6px;background:linear-gradient(#fff,#fafafa);border:1px solid #a9a9a9;border-radius:3px"></div>
<div class="a" style="left:181.0px;top:594.8px;font-size:11px;line-height:14px;color:#262626;white-space:pre;">Link</div>
<div class="a" style="left:84.2px;top:614.3px;width:11.8px;height:11.6px;background:linear-gradient(#6aa0f8,#3f80f4);border-radius:3px"></div>
<svg class="a" style="left:86.0px;top:616.3px" width="9" height="8" viewBox="0 0 9 8"><path d="M1 4.2L3.4 6.6L8 1.2" fill="none" stroke="#fff" stroke-width="1.5"/></svg>
<div class="a" style="left:101.6px;top:612.7px;font-size:11px;line-height:14px;color:#262626;white-space:pre;">Image</div>
<div class="a" style="left:164.0px;top:614.3px;width:11.8px;height:11.6px;background:linear-gradient(#fff,#fafafa);border:1px solid #a9a9a9;border-radius:3px"></div>
<div class="a" style="left:181.0px;top:612.7px;font-size:11px;line-height:14px;color:#262626;white-space:pre;">Selected</div>
<div class="a" style="left:84.2px;top:632.3px;width:11.8px;height:11.6px;background:linear-gradient(#fff,#fafafa);border:1px solid #a9a9a9;border-radius:3px"></div>
<div class="a" style="left:101.6px;top:630.7px;font-size:11px;line-height:14px;color:#262626;white-space:pre;">Static Text</div>
<div class="a" style="left:84.2px;top:650.3px;width:11.8px;height:11.6px;background:linear-gradient(#fff,#fafafa);border:1px solid #a9a9a9;border-radius:3px"></div>
<div class="a" style="left:101.6px;top:648.6px;font-size:11px;line-height:14px;color:#262626;white-space:pre;">Search Field</div>
<div class="a" style="left:84.2px;top:668.3px;width:11.8px;height:11.6px;background:linear-gradient(#fff,#fafafa);border:1px solid #a9a9a9;border-radius:3px"></div>
<div class="a" style="left:101.6px;top:666.6px;font-size:11px;line-height:14px;color:#262626;white-space:pre;">Plays Sound</div>
<div class="a" style="left:0.0px;top:701.0px;width:259.0px;height:190.0px;background:#fff;overflow:hidden"></div>
<div class="a" style="left:244.0px;top:701.0px;width:15.0px;height:190.0px;background:#f7f7f7;border-left:1px solid #e4e4e4"></div>
<div class="a" style="left:248.0px;top:821.0px;width:8.0px;height:18.0px;background:#c3c3c3;border-radius:4px"></div>
<div class="a" style="left:9.2px;top:691.0px;width:43.5px;height:44.2px;background:#d3d3d3;border:1px solid #b3b3b3"></div>
<svg class="a" style="left:15.0px;top:697.5px" width="33" height="33" viewBox="0 0 33 33"><circle cx="16.5" cy="16.5" r="15.5" fill="none" stroke="#f2f2f2" stroke-width="1.6"/><circle cx="16.5" cy="16.5" r="12.5" fill="none" stroke="#eee" stroke-width="1.2" stroke-dasharray="1 2.3"/><path d="M24 9L18 18L9 24L15 15Z" fill="#f4f4f4"/></svg>
<div class="a" style="left:60.2px;top:692.0px;font-size:11px;line-height:14px;color:#111;white-space:pre;"><b>Web View</b> - Displays embedded</div>
<div class="a" style="left:60.2px;top:706.8px;font-size:11px;line-height:14px;color:#111;white-space:pre;">web content and enables content</div>
<div class="a" style="left:60.2px;top:719.5px;font-size:11px;line-height:14px;color:#111;white-space:pre;">navigation.</div>
<div class="a" style="left:0.0px;top:745.0px;width:244.0px;height:1.0px;background:#c9c9c9"></div>
<div class="a" style="left:0.0px;top:746.0px;width:244.0px;height:62.0px;background:#e8e8e8"></div>
<div class="a" style="left:0.0px;top:808.0px;width:244.0px;height:1.0px;background:#c4c4c4"></div>
<div class="a" style="left:23.3px;top:769.0px;width:15.7px;height:15.6px;background:#dcdcdc;border:1px solid #8c8c8c"></div>
<div class="a" style="left:29px;top:775px;width:6px;height:6px;border-radius:50%;border:1px solid #3d7df5;background:radial-gradient(circle,#3d7df5 0 1.1px,transparent 1.3px)"></div>
<div class="a" style="left:60.2px;top:756.7px;font-size:11.6px;line-height:14px;color:#111;white-space:pre;"><b>Tap Gesture Recognizer</b> -</div>
<div class="a" style="left:60.2px;top:769.8px;font-size:11px;line-height:14px;color:#111;white-space:pre;">Provides a recognizer for tap</div>
<div class="a" style="left:60.2px;top:782.4px;font-size:11px;line-height:14px;color:#111;white-space:pre;">gestures which land on the view.</div>
<div class="a" style="left:9.2px;top:818.2px;width:43.5px;height:43.3px;background:#d3d3d3;border:1px solid #b3b3b3"></div>
<svg class="a" style="left:10.0px;top:819.0px" width="42" height="42" viewBox="0 0 42 42"><path d="M28 10L12 28" stroke="#82acee" stroke-width="4.5" stroke-linecap="round"/><circle cx="32.5" cy="11" r="6.8" fill="#82acee"/><circle cx="32.5" cy="11" r="4.4" fill="#fff"/><circle cx="32.5" cy="11" r="3.4" fill="#3d7df5"/><circle cx="9.5" cy="31.5" r="6.8" fill="#82acee"/><circle cx="9.5" cy="31.5" r="4.4" fill="#fff"/><circle cx="9.5" cy="31.5" r="3.4" fill="#3d7df5"/></svg>
<div class="a" style="left:60.2px;top:819.6px;font-size:11.6px;line-height:14px;color:#111;white-space:pre;"><b>Pinch Gesture Recognizer</b> -</div>
<div class="a" style="left:60.2px;top:832.8px;font-size:11px;line-height:14px;color:#111;white-space:pre;">Provides a recognizer for pinch</div>
<div class="a" style="left:60.2px;top:845.4px;font-size:11px;line-height:14px;color:#111;white-space:pre;">gestures which are invoked on th...</div>
<div class="a" style="left:4.0px;top:871.0px;width:236.0px;height:1.0px;background:#cfcfcf"></div>
<div class="a" style="left:9.2px;top:881.3px;width:43.5px;height:43.7px;background:#d3d3d3;border:1px solid #b3b3b3"></div>
<svg class="a" style="left:26.0px;top:886.0px" width="20" height="6" viewBox="0 0 20 6"><path d="M1 1Q8 1 14 5" fill="none" stroke="#8db3f0" stroke-width="3"/></svg>
<div class="a" style="left:60.2px;top:882.5px;font-size:11.6px;line-height:14px;color:#111;white-space:pre;"><b>Rotation Gesture Recognizer</b> -</div>
<div class="a" style="left:0.0px;top:671.0px;width:259.0px;height:29.0px;background:#fcfcfc;border-top:1px solid #ababab;border-bottom:1px solid #c9c9c9"></div>
<svg class="a" style="left:78px;top:679.3px" width="120" height="16" viewBox="0 0 120 16"><g fill="none" stroke="#555" stroke-width="1.1"><path d="M1.5 1.5H7.5L11.5 5.5V13.5H1.5Z M7.5 1.5V5.5H11.5"/><path d="M34.5 1.5Q32 1.5 32 3.5V6Q32 7.5 30.5 7.5Q32 7.5 32 9V11.5Q32 13.5 34.5 13.5M39.5 1.5Q42 1.5 42 3.5V6Q42 7.5 43.5 7.5Q42 7.5 42 9V11.5Q42 13.5 39.5 13.5"/><path d="M90.5 1.5H103.5V13.5H90.5ZM92.8 1.5V13.5M101.2 1.5V13.5M90.5 4H92.8M90.5 6.5H92.8M90.5 9H92.8M90.5 11.5H92.8M101.2 4H103.5M101.2 6.5H103.5M101.2 9H103.5M101.2 11.5H103.5"/></g><circle cx="66.5" cy="7.5" r="6.6" fill="none" stroke="#3f7ef6" stroke-width="1.6"/><rect x="64" y="5" width="5" height="5" fill="none" stroke="#3f7ef6" stroke-width="1.2"/></svg>
<div class="a" style="left:0.0px;top:891.0px;width:259.0px;height:28.0px;background:#f3f3f3;border-top:1px solid #b9b9b9"></div>
<svg class="a" style="left:8.0px;top:900.0px" width="14" height="14" viewBox="0 0 14 14"><path d="M0.5 0.5H5.5V5.5H0.5ZM7.5 0.5H12.5V5.5H7.5ZM0.5 7.5H5.5V12.5H0.5ZM7.5 7.5H12.5V12.5H7.5Z" fill="none" stroke="#666" stroke-width="1"/></svg>
<div class="a" style="left:28.4px;top:895.5px;width:225.1px;height:21.0px;background:#fff;border:1px solid #c2c2c2;border-radius:4px"></div>
<svg class="a" style="left:33.3px;top:900.3px" width="13" height="13" viewBox="0 0 13 13"><circle cx="6.5" cy="6.5" r="5.8" fill="none" stroke="#7a7a7a" stroke-width="1.1"/><path d="M3 6.6A3.5 3.5 0 0 1 10 6.6Z" fill="#8a8a8a"/></svg>
<div class="a" style="left:50.6px;top:898.8px;font-size:12px;line-height:14px;color:#b0b0b0;white-space:pre;">Filter</div>
  </div>
</div>
<div class="a" style="left:0;top:2px;width:1573px;height:1px;background:rgba(255,255,255,.75)"></div>
<div class="a" style="left:1px;top:2px;width:1px;height:37px;background:rgba(255,255,255,.6)"></div>
<div class="a" style="left:0;top:0;width:1573px;height:1px;background:#5b77b0"></div>
<div class="a" style="left:0;top:1px;width:1573px;height:1px;background:#4b6299"></div>
<div class="a" style="left:0;top:0;width:1px;height:959px;background:#43598f"></div>
<svg class="a" style="left:0;top:0" width="8" height="9" viewBox="0 0 8 9"><path d="M0 0H8V2H6.5A5 5 0 0 0 1 7.5V9H0Z" fill="#4d659c"/></svg>
<svg class="a" style="left:1565px;top:0" width="8" height="9" viewBox="0 0 8 9"><path d="M8 0H0V2H1.5A5 5 0 0 1 8 7.5V9H8Z" fill="#4d659c"/></svg>
</body></html>
